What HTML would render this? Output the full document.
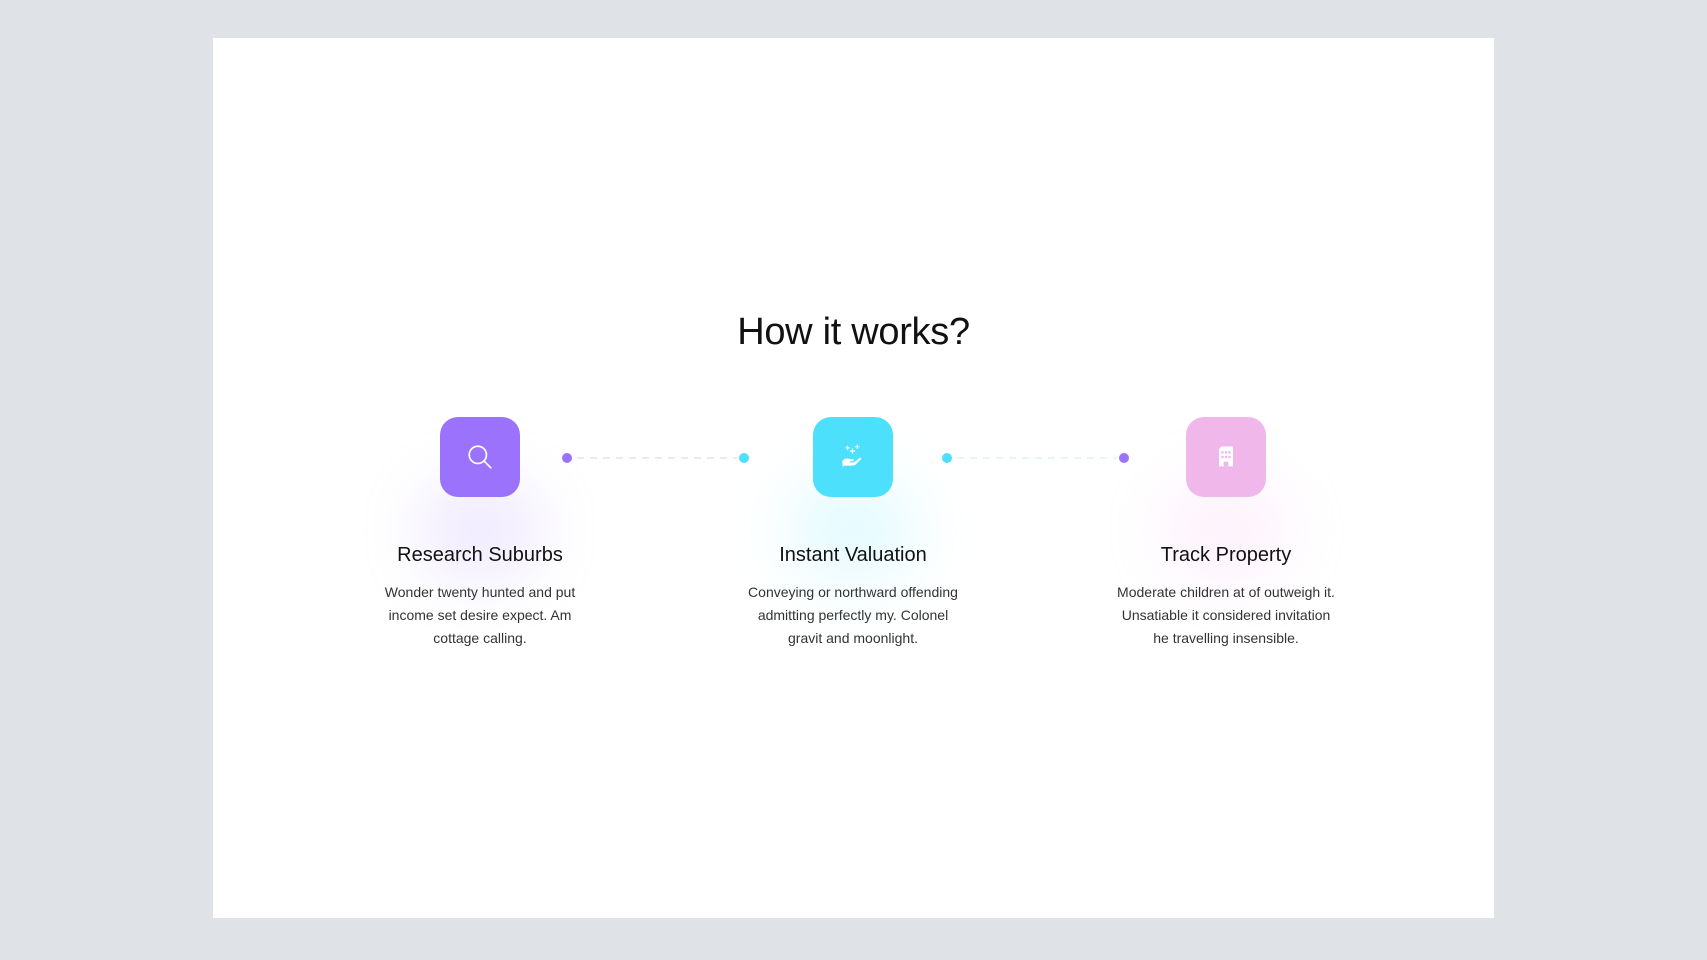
<!DOCTYPE html>
<html><head><meta charset="utf-8"><style>
html,body{margin:0;padding:0}
body{width:1707px;height:960px;background:#dfe2e6;position:relative;font-family:"Liberation Sans",sans-serif;overflow:hidden}
.card{position:absolute;left:213px;top:38px;width:1281px;height:880px;background:#fff}
h1{position:absolute;left:0;top:311px;width:1707px;text-align:center;margin:0;font-size:38px;font-weight:400;color:#111;letter-spacing:-0.3px}
.box{position:absolute;width:80px;height:80px;border-radius:18px;top:417px;display:flex;align-items:center;justify-content:center}
.glow{position:absolute;width:130px;height:110px;top:475px;border-radius:50%;filter:blur(30px);opacity:.2}
.dot{position:absolute;width:10px;height:10px;border-radius:50%;top:453px}
.dash{position:absolute;top:457px;height:2px;background:repeating-linear-gradient(90deg,#e8eafc 0 7px,transparent 7px 13px)}
.h{position:absolute;top:544px;width:300px;text-align:center;font-size:20px;color:#111}
.p{position:absolute;top:581px;width:260px;text-align:center;font-size:14px;line-height:23px;color:#333}
</style></head><body>
<div class="card"></div>
<h1>How it works?</h1>
<div class="glow" style="left:415px;background:#b9a0ff"></div>
<div class="glow" style="left:788px;background:#7fe9ff"></div>
<div class="glow" style="left:1161px;background:#f7c2f0"></div>
<div class="box" style="left:440px;background:#9b72fb">
<svg width="28" height="28" viewBox="0 0 26 26" fill="none" stroke="#fff" stroke-width="1.6"><circle cx="11" cy="11" r="8"/><path d="M17 17l6 6" stroke-linecap="round"/></svg></div>
<div class="box" style="left:813px;background:#4de0fd">
<svg width="28" height="28" viewBox="0 0 26 26" fill="#fff"><path d="M10 7h2v-2h1v2h2v1h-2v2h-1v-2h-2z"/><path d="M6 4h1.5v-1.5h1v1.5h1.5v1h-1.5v1.5h-1v-1.5h-1.5z"/><path d="M15 3h1.5v-1.5h1v1.5h1.5v1h-1.5v1.5h-1v-1.5h-1.5z"/><path d="M3 17c2-3 5-3 7-2h3c1 0 1 2 0 2h-3v1h4l5-4c1-1 2 0 1.5 1l-5 5c-1 1-2 1-3 1h-7l-2 1z"/></svg></div>
<div class="box" style="left:1186px;background:#f0b8ea">
<svg width="28" height="28" viewBox="0 0 24 24" fill="#fff"><path d="M6 5l2-2h10v17h-12z"/><g fill="#f0b8ea"><rect x="8" y="7" width="2" height="2"/><rect x="11" y="7" width="2" height="2"/><rect x="14" y="7" width="2" height="2"/><rect x="8" y="11" width="2" height="2"/><rect x="11" y="11" width="2" height="2"/><rect x="14" y="11" width="2" height="2"/><rect x="10" y="16" width="4" height="4"/></g></svg></div>
<div class="dot" style="left:562px;background:#9b72fb"></div>
<div class="dash" style="left:577px;width:160px"></div>
<div class="dot" style="left:739px;background:#4de0fd"></div>
<div class="dot" style="left:942px;background:#4de0fd"></div>
<div class="dash" style="left:957px;width:160px;background:repeating-linear-gradient(90deg,#e3f6fc 0 7px,transparent 7px 13px)"></div>
<div class="dot" style="left:1119px;background:#9b72fb"></div>
<div class="h" style="left:330px">Research Suburbs</div>
<div class="h" style="left:703px">Instant Valuation</div>
<div class="h" style="left:1076px">Track Property</div>
<div class="p" style="left:350px">Wonder twenty hunted and put<br>income set desire expect. Am<br>cottage calling.</div>
<div class="p" style="left:723px">Conveying or northward offending<br>admitting perfectly my. Colonel<br>gravit and moonlight.</div>
<div class="p" style="left:1096px">Moderate children at of outweigh it.<br>Unsatiable it considered invitation<br>he travelling insensible.</div>
</body></html>
